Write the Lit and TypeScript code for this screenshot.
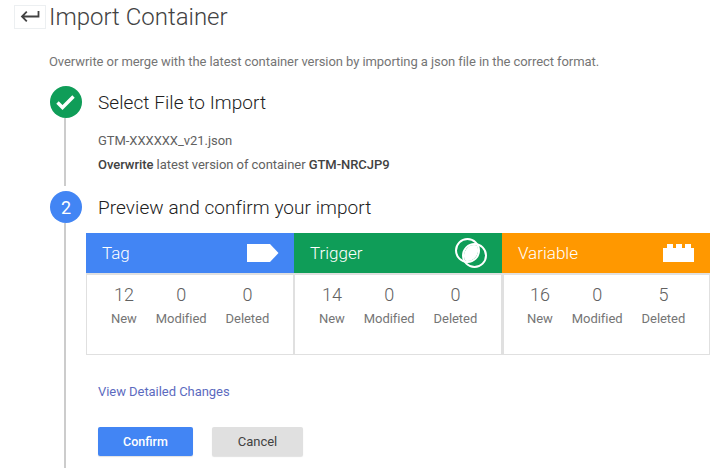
import { LitElement, html, css, svg } from "lit";
import { customElement } from "lit/decorators.js";

const tagIcon = svg`<svg class="icon" width="32" height="18" viewBox="0 0 32 18"><path d="M0 0H23L31.5 9L23 18H0Z" fill="#fff"/></svg>`;
const triggerIcon = svg`<svg class="icon" width="32" height="30" viewBox="0 0 32 30"><path d="M21.57 7.2A10.5 10.5 0 0 0 10.43 22.8A10.5 10.5 0 0 0 21.57 7.2Z" fill="#fff"/><circle cx="12.5" cy="12.5" r="11.5" fill="none" stroke="#fff" stroke-width="2"/><circle cx="19.5" cy="17.5" r="11.5" fill="none" stroke="#fff" stroke-width="2"/></svg>`;
const varIcon = svg`<svg class="icon" width="32" height="18" viewBox="0 0 32 18"><path d="M0 18V4H4V0H10V4H13V0H19V4H22V0H28V4H31V18Z" fill="#fff"/></svg>`;

const cards = [
  { name: "Tag", cls: "blue", icon: tagIcon, n: [12, 0, 0] },
  { name: "Trigger", cls: "green", icon: triggerIcon, n: [14, 0, 0] },
  { name: "Variable", cls: "orange", icon: varIcon, n: [16, 0, 5] },
];

@customElement("app-root")
export class AppRoot extends LitElement {
  static styles = css`
    :host { display: block; width: 727px; height: 468px; overflow: hidden; background: #fff; font-family: Roboto, sans-serif; color: #616161; }
    .head { display: flex; align-items: flex-start; padding: 5px 0 0 14px; box-sizing: border-box; height: 34px; }
    .back { width: 32px; height: 24px; box-sizing: border-box; border: 1px solid #eceff1; display: flex; align-items: center; justify-content: center; background: #fff; margin-right: 3px; }
    h1 { margin: 0; font-weight: 300; font-size: 24px; line-height: 24px; color: #424242; }
    .desc { margin: 21px 0 0 49px; font-size: 13px; line-height: 14px; color: #757575; letter-spacing: -.07px; }
    .step { display: grid; grid-template-columns: 32px 1fr; column-gap: 16px; margin-left: 50px; }
    .s1 { margin-top: 17px; }
    .s2 { margin-top: 5px; }
    .num { width: 32px; height: 32px; border-radius: 50%; display: flex; align-items: center; justify-content: center; color: #fff; font-size: 18px; }
    .num.g { background: #0f9d58; }
    .num.b { background: #4285f4; }
    .rail { grid-column: 1; display: flex; justify-content: center; }
    .rail i { display: block; width: 2px; background: #cccccc; margin-right: 2px; }
    .title { font-size: 19px; height: 32px; line-height: 34px; color: #212121; font-weight: 300; letter-spacing: .07px; white-space: nowrap; }
    .body1 { font-size: 13px; line-height: 24px; color: #616161; padding-top: 11px; height: 68px; box-sizing: border-box; letter-spacing: -.05px; }
    .body1 b { font-weight: 500; color: #424242; }
    .grid2 { margin-left: -12px; padding-top: 10px; }
    .cards { display: grid; grid-template-columns: repeat(3, 208px); }
    .chead { height: 40px; display: flex; align-items: center; justify-content: space-between; padding: 0 15px 0 16px; color: #fff; font-size: 17px; font-weight: 300; }
    .blue { background: #4285f4; }
    .green { background: #0f9d58; }
    .orange { background: #ff9800; }
    .cbody { height: 82px; box-sizing: border-box; border: 1px solid #e0e0e0; border-top-width: 2px; display: flex; gap: 19px; padding: 10px 0 0 24px; }
    .card + .card .cbody { border-left-width: 2px; padding-left: 23px; }
    .card:nth-child(2) .cbody { border-left-width: 1px; padding-left: 24px; }
    .stat { display: flex; flex-direction: column; align-items: center; }
    .val { font-size: 18px; font-weight: 300; line-height: 20px; color: #616161; }
    .lab { font-size: 13px; line-height: 14px; margin-top: 7px; color: #757575; letter-spacing: -.05px; }
    .link { margin: 30px 0 0 0; font-size: 13px; line-height: 14px; color: #3f51b5; opacity: .85; letter-spacing: -.05px; }
    .btns { display: flex; gap: 19px; margin: 28px 0 0 0; }
    button { height: 29px; border: 0; border-radius: 2px; font: 500 12.5px Roboto, sans-serif; padding: 0; box-shadow: 0 1px 1px rgba(0,0,0,.12); }
    .ok { width: 95px; background: #4285f4; color: #fff; }
    .no { width: 91px; background: #e0e0e0; color: #424242; font-weight: 400; font-size: 13px; }
    .tail { height: 100px; }
    .icon { display: block; overflow: visible; }
  `;

  render() {
    return html`
      <div class="head">
        <div class="back">
          <svg width="20" height="12" viewBox="0 0 20 12"><path d="M18.5 0V5.5H2M6.8 .7L2 5.5L6.8 10.3" fill="none" stroke="#424242" stroke-width="1.8"/></svg>
        </div>
        <h1>Import Container</h1>
      </div>
      <div class="desc">Overwrite or merge with the latest container version by importing a json file in the correct format.</div>
      <div class="step s1">
        <div class="num g"><svg width="20" height="16" viewBox="0 0 20 16"><path d="M1.5 8.5L6.5 13.5L17.5 2.5" fill="none" stroke="#fff" stroke-width="3.4"/></svg></div>
        <div class="title">Select File to Import</div>
        <div class="rail"><i></i></div>
        <div class="body1">GTM-XXXXXX_v21.json<br><b>Overwrite</b> latest version of container <b>GTM-NRCJP9</b></div>
      </div>
      <div class="step s2">
        <div class="num b">2</div>
        <div class="title">Preview and confirm your import</div>
        <div class="rail"><i></i></div>
        <div>
          <div class="grid2">
            <div class="cards">
              ${cards.map((c) => html`
                <div class="card">
                  <div class="chead ${c.cls}"><span>${c.name}</span>${c.icon}</div>
                  <div class="cbody">
                    ${["New", "Modified", "Deleted"].map((l, i) => html`
                      <div class="stat"><span class="val">${c.n[i]}</span><span class="lab">${l}</span></div>`)}
                  </div>
                </div>`)}
            </div>
          </div>
          <div class="link">View Detailed Changes</div>
          <div class="btns"><button class="ok">Confirm</button><button class="no">Cancel</button></div>
          <div class="tail"></div>
        </div>
      </div>
    `;
  }
}
